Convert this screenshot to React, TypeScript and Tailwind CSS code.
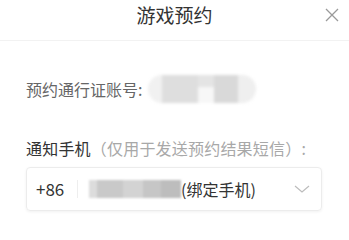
const font = { fontFamily: '"Noto Sans CJK SC", "Noto Sans", sans-serif' };

function BlurredAccount() {
  return (
    <div className="flex h-[28px] w-[108px] blur-[1.5px]">
      <div className="w-[14px] rounded-l-full bg-[#f1f1f1]" />
      <div className="w-[36px] bg-[#dedede]" />
      <div className="flex w-[16px] flex-col">
        <div className="h-[12px] bg-[#e4e4e4]" />
        <div className="flex-1 bg-[#f7f7f7]" />
      </div>
      <div className="w-[24px] bg-[#d9d9d9]" />
      <div className="w-[18px] rounded-r-full bg-[#efefef]" />
    </div>
  );
}

function BlurredPhone() {
  return (
    <div className="flex h-[18px] w-[92px] blur-[1.2px]">
      <div className="w-[8px] bg-[#dcdcdc]" />
      <div className="w-[26px] bg-[#c9c9c9]" />
      <div className="w-[20px] bg-[#d3d3d3]" />
      <div className="w-[18px] bg-[#c6c6c6]" />
      <div className="w-[20px] bg-[#bdbdbd]" />
    </div>
  );
}

export default function App() {
  return (
    <div className="h-[226px] w-[349px] overflow-hidden bg-white" style={font}>
      <div className="grid h-[41px] grid-cols-[1fr_auto_1fr] border-b border-[#f2f2f2]">
        <div />
        <div className="h-[30px] text-[19px] leading-[30px] text-[#333]">游戏预约</div>
        <div className="flex h-[30px] items-center justify-end pr-[10px]">
          <svg width="14" height="14" viewBox="0 0 14 14" fill="none" stroke="#9a9a9a" strokeWidth="1.3">
            <path d="M1 1L13 13M13 1L1 13" />
          </svg>
        </div>
      </div>

      <div className="px-[26px]">
        <div className="mt-[34px] flex items-center">
          <span className="text-[16px] leading-[28px] text-[#666]">预约通行证账号:</span>
          <div className="ml-[6px]">
            <BlurredAccount />
          </div>
        </div>

        <div className="mt-[34px] text-[16px] leading-[22px] tracking-[0.2px]">
          <span className="text-[#333]">通知手机</span>
          <span className="text-[#a8a8a8]">（仅用于发送预约结果短信）:</span>
        </div>

        <div className="mt-[8px] flex h-[44px] w-[296px] items-center rounded-[4px] border border-[#ececec] shadow-[0_1px_3px_rgba(0,0,0,0.06)]">
          <span className="ml-[9px] w-[31px] text-[17px] text-[#333]">+86</span>
          <div className="ml-[10px] h-[18px] w-px bg-[#eeeeee]" />
          <div className="ml-[11px]">
            <BlurredPhone />
          </div>
          <span className="text-[16px] text-[#333]">(绑定手机)</span>
          <div className="flex-1" />
          <svg className="mr-[11px]" width="16" height="8" viewBox="0 0 16 8" fill="none" stroke="#bcbcbc" strokeWidth="1.2">
            <path d="M1 1L8 7L15 1" />
          </svg>
        </div>
      </div>
    </div>
  );
}
